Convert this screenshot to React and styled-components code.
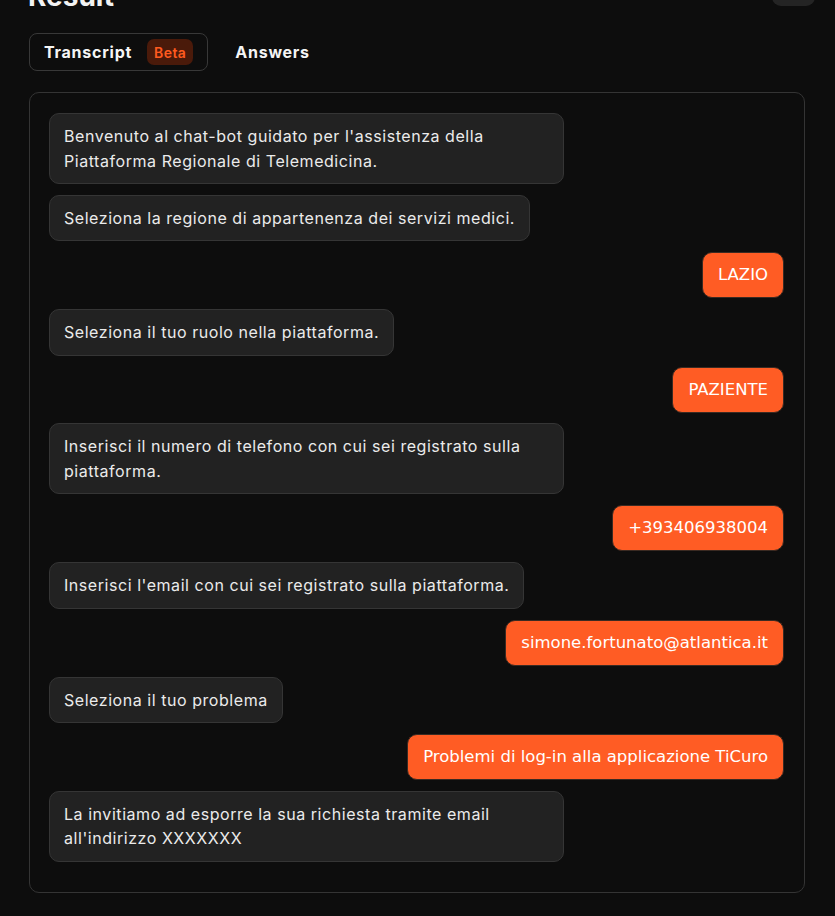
import React, { useState } from "react";
import styled, { createGlobalStyle } from "styled-components";

const GlobalStyle = createGlobalStyle`
	html, body {
		margin: 0;
		padding: 0;
		background: #0d0d0d;
		color: #ececec;
		font-family: Inter, "Noto Sans", sans-serif;
	}
`;

const messages = [
	{ from: "bot", text: "Benvenuto al chat-bot guidato per l'assistenza della Piattaforma Regionale di Telemedicina." },
	{ from: "bot", text: "Seleziona la regione di appartenenza dei servizi medici." },
	{ from: "user", text: "LAZIO" },
	{ from: "bot", text: "Seleziona il tuo ruolo nella piattaforma." },
	{ from: "user", text: "PAZIENTE" },
	{ from: "bot", text: "Inserisci il numero di telefono con cui sei registrato sulla piattaforma." },
	{ from: "user", text: "+393406938004" },
	{ from: "bot", text: "Inserisci l'email con cui sei registrato sulla piattaforma." },
	{ from: "user", text: "simone.fortunato@atlantica.it" },
	{ from: "bot", text: "Seleziona il tuo problema" },
	{ from: "user", text: "Problemi di log-in alla applicazione TiCuro" },
	{ from: "bot", text: "La invitiamo ad esporre la sua richiesta tramite email all'indirizzo XXXXXXX" },
];

function App() {
	const [tab, setTab] = useState("transcript");

	return (
		<Page>
			<GlobalStyle />
			<Header>
				<Title>Result</Title>
				<IconButton aria-label="more" />
			</Header>
			<Tabs>
				<Tab $active={tab === "transcript"} onClick={() => setTab("transcript")}>
					Transcript
					<Badge>Beta</Badge>
				</Tab>
				<Tab $active={tab === "answers"} onClick={() => setTab("answers")}>
					Answers
				</Tab>
			</Tabs>
			<Panel>
				{messages.map((m, i) => (
					<Bubble key={i} $user={m.from === "user"}>
						{m.text}
					</Bubble>
				))}
			</Panel>
		</Page>
	);
}

export default App;

const Page = styled.div`
	padding: 0 30px 24px 29px;
	margin-top: -30px;
`;

const Header = styled.div`
	display: flex;
	justify-content: space-between;
	align-items: flex-start;
	margin-right: -10px;
	margin-left: -1px;
`;

const Title = styled.h1`
	margin: 8px 0 0;
	font-size: 28px;
	line-height: 36px;
	font-weight: 700;
	color: #f2f2f2;
`;

const IconButton = styled.button`
	width: 43px;
	height: 36px;
	border: none;
	border-radius: 9px;
	background: #242424;
`;

const Tabs = styled.div`
	display: flex;
	align-items: center;
	gap: 12px;
	margin-top: 19px;
`;

const Tab = styled.button`
	display: flex;
	align-items: center;
	gap: 15px;
	height: 38px;
	padding: 0 14px;
	border: 1px solid ${(p) => (p.$active ? "#383838" : "transparent")};
	border-radius: 8px;
	background: transparent;
	color: #f5f5f5;
	font-family: Inter, "Noto Sans", sans-serif;
	font-size: 16px;
	font-weight: 700;
	letter-spacing: 0.75px;
	cursor: pointer;
`;

const Badge = styled.span`
	display: inline-flex;
	align-items: center;
	height: 26px;
	padding: 0 7px;
	border-radius: 7px;
	background: #4a1a0a;
	color: #ff5a1f;
	font-size: 14px;
	font-weight: 600;
	letter-spacing: 0.4px;
`;

const Panel = styled.div`
	display: flex;
	flex-direction: column;
	gap: 10.9px;
	margin-top: 21px;
	padding: 20px 20px 30px 19px;
	border: 1px solid #343434;
	border-radius: 10px;
`;

const Bubble = styled.div`
	align-self: ${(p) => (p.$user ? "flex-end" : "flex-start")};
	max-width: 70%;
	box-sizing: border-box;
	padding: ${(p) => (p.$user ? "10px 15px" : "10px 14px")};
	border: 1px solid ${(p) => (p.$user ? "#3a2a22" : "#353535")};
	border-radius: 10px;
	background: ${(p) => (p.$user ? "#ff5c24" : "#222222")};
	color: ${(p) => (p.$user ? "#ffffff" : "#ebebeb")};
	font-family: ${(p) => (p.$user ? `"DejaVu Sans", Verdana, sans-serif` : `Inter, "Noto Sans", sans-serif`)};
	font-size: ${(p) => (p.$user ? "16.5px" : "16px")};
	letter-spacing: ${(p) => (p.$user ? "0" : "0.55px")};
	line-height: ${(p) => (p.$user ? "24px" : "24.5px")};
`;
